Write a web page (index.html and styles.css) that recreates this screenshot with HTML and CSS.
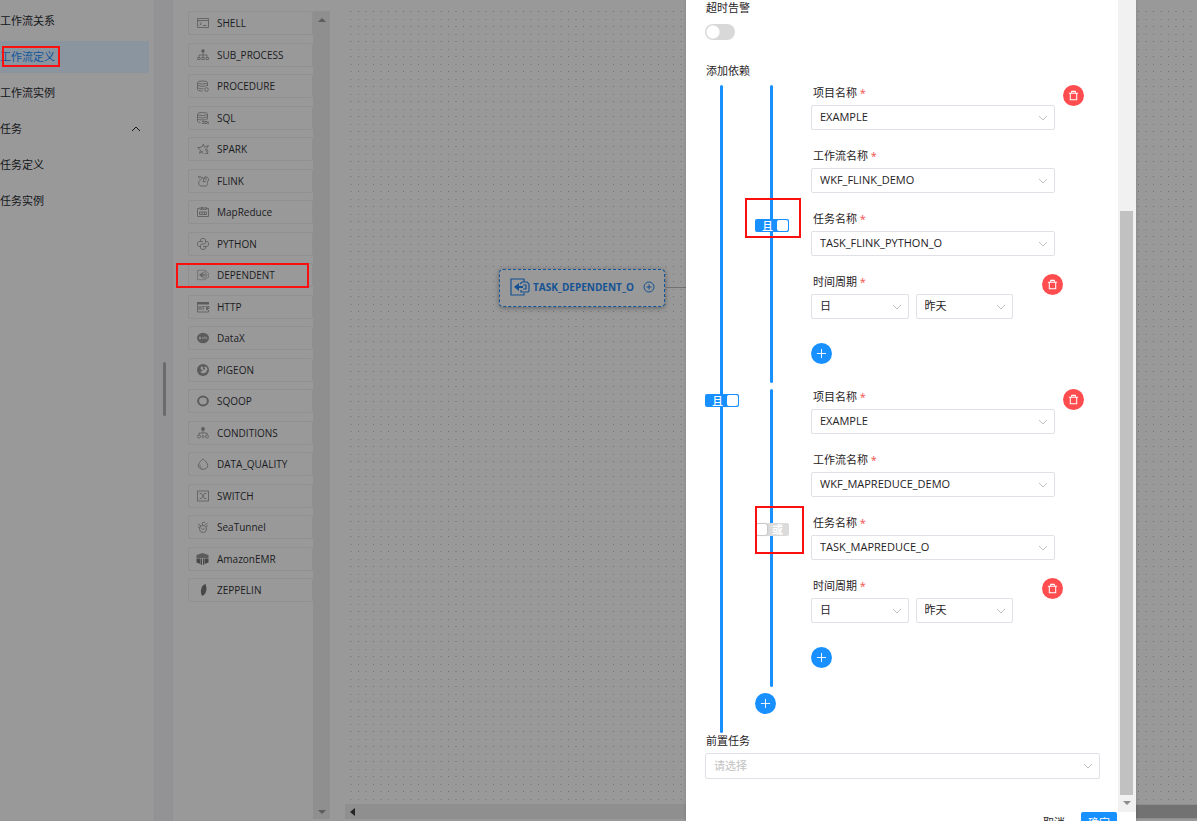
FILE: index.html
```html
<!DOCTYPE html>
<html lang="zh-CN">
<head>
<meta charset="utf-8">
<title>工作流定义</title>
<link rel="stylesheet" href="styles.css">
</head>
<body>
<svg class="defs" aria-hidden="true">
  <symbol id="chev" viewBox="0 0 10 6"><path d="M1 1l4 4 4-4" fill="none" stroke="currentColor"/></symbol>
  <symbol id="trash" viewBox="0 0 12 12"><path d="M1 3.500h10M4 3V1.500h4V3M2.500 3.500v7.200h7V3.500" fill="none" stroke="currentColor" stroke-width="1.100"/></symbol>
  <symbol id="plus" viewBox="0 0 12 12"><path d="M6 1v10M1 6h10" fill="none" stroke="currentColor"/></symbol>
  <symbol id="dep" viewBox="0 0 20 18"><path d="M14 4V1H1v16h13v-2" fill="none" stroke="currentColor" stroke-width="1.200"/><path d="M4 9l5-4v3h4v2H9v3z" fill="currentColor"/><path d="M10 6l2-2h5l2 2v7l-1 1h-7v-2M13 7h3v4h-3" fill="none" stroke="currentColor" stroke-width="1.200"/></symbol>
</svg>
<div class="page">
  <nav class="side">
    <a class="side-item" href="#">工作流关系</a>
    <a class="side-item active" href="#">工作流定义<span class="mark mark-side"></span></a>
    <a class="side-item" href="#">工作流实例</a>
    <a class="side-item" href="#">任务<svg class="side-chev"><use href="#chev"/></svg></a>
    <a class="side-item" href="#">任务定义</a>
    <a class="side-item" href="#">任务实例</a>
  </nav>
  <div class="gutter"><span class="handle"></span></div>
  <section class="palette">
    <ul class="tasks">
      <li><svg viewBox="0 0 12 12"><path d="M.5 1.500h11v9H.5zM.5 3.500h11M2.500 5l2 1.700-2 1.600M6 8.500h3.500"/></svg>SHELL</li>
      <li><svg viewBox="0 0 12 12"><circle class="f" cx="6" cy="2" r="1.700"/><path d="M6 3v5M2 8V6h8v2M.6 8.500h2.500v2H.6zM4.800 8.500h2.500v2H4.800zM9 8.500h2.500v2H9z"/></svg>SUB_PROCESS</li>
      <li><svg viewBox="0 0 12 12"><ellipse cx="5.500" cy="2.500" rx="5" ry="1.500"/><path d="M.5 2.500v7c0 1 2 1.500 5 1.500M10.500 2.500V6M.5 5c1 1.500 8 2 10 0M.5 7.500c1 1 3 1.500 6 1.200"/><circle cx="9.500" cy="9.500" r="1.800"/></svg>PROCEDURE</li>
      <li><svg viewBox="0 0 12 12"><ellipse cx="5.500" cy="2" rx="5" ry="1.500"/><path d="M.5 2v7c0 1 1 1.500 3 1.700M10.500 2v5M.5 4.500c1 1.500 8 2 10 0M.5 7c1 1 8 1.500 10 0M5 9.500h2v2H5M8 9.500h2v2H8zM11 9v2.500h1"/></svg>SQL</li>
      <li><svg viewBox="0 0 12 12"><path d="M6.500 1l.8 3.200 4.200-1.700-2 3.200 1.500 3M6.500 1L4.500 4.200.5 4.500l3 2.500L2.500 10.500 6 8M4 8.500l2.500 2M8 6l3 4.500H8"/></svg>SPARK</li>
      <li><svg viewBox="0 0 12 12"><path d="M3 4C.5 2 1 .8 3 1.500s2 2 1 3l-2 2c-1 2 0 4.500 2 4.500h4c3 0 3-2 2-4 2-1 2-3 .5-4.500S7 1 7.500 4M5 2l2 2-1 3 3-1M9 2v3"/></svg>FLINK</li>
      <li><svg viewBox="0 0 12 12"><path d="M2.500 2.500H.5v8h11v-8h-2M3 1v2.500h1.500V1M5.500 1v2.500H7V1M8 1v2.500h1.500V1M2.500 6h7v2.500h-7zM5 6v2.500M7.500 6v2.500"/></svg>MapReduce</li>
      <li><svg viewBox="0 0 12 12"><path d="M3.500 3.500V2c0-2 5-2 5 0v2.500c0 1-.5 1.500-1.500 1.500H5C4 6 3.500 6.500 3.500 7.500v1H2C0 8.500 0 3.500 2 3.500h4M8.500 3.500H10c2 0 2 5 0 5H6M8.500 8.500V10c0 2-5 2-5 0V8"/></svg>PYTHON</li>
      <li><svg viewBox="0 0 20 18"><use href="#dep"/></svg>DEPENDENT<span class="mark mark-task"></span></li>
      <li><svg viewBox="0 0 12 12"><path class="f" d="M0 1h12v2.500H0z"/><path d="M.5 3v8h11V9M2 5v4M4 5v4M2 7h2M5 5.500h2.500M6.200 5.500V9M8 5.500h1.500V9M10.500 9V5.500H12v2h-1.500"/></svg>HTTP</li>
      <li><svg viewBox="0 0 12 12"><ellipse class="f" cx="6" cy="6" rx="6" ry="5.200"/><path class="lite" d="M2.500 5v2h1V5zM5 7l.7-2 .7 2M7 5h1.500M8 5v2M9 5l1 2"/></svg>DataX</li>
      <li><svg viewBox="0 0 12 12"><circle class="f" cx="6" cy="6" r="6"/><path class="lite2" d="M4 2l2 1.500L9 2.500 10.500 5 9 8.500 6 9.500 3 8l3-1.500L3.500 5z"/><path class="f" d="M6 3.500h2v2H6z"/></svg>PIGEON</li>
      <li><svg viewBox="0 0 12 12"><ellipse class="ring" cx="6" cy="6" rx="4.900" ry="4.400"/></svg>SQOOP</li>
      <li><svg viewBox="0 0 12 12"><circle class="f" cx="6" cy="2" r="1.900"/><path d="M6 3v3M2 8V6h8v2"/><circle cx="2" cy="9.500" r="1.500"/><circle cx="6" cy="9.500" r="1"/><circle cx="10" cy="9.500" r="1.500"/></svg>CONDITIONS</li>
      <li><svg viewBox="0 0 12 12"><path d="M6 .8C4 3 1.200 5 1.200 7.500c0 5 9.600 5 9.600 0C10.800 5 8 3 6 .8zM3 6.500c-.5 2 .5 3 1.500 3.500"/></svg>DATA_QUALITY</li>
      <li><svg viewBox="0 0 12 12"><path d="M.5 1h11v10H.5zM2.500 3.500h2L7.500 8.500h2M2.500 8.500h2l3-5h2"/></svg>SWITCH</li>
      <li><svg viewBox="0 0 12 12"><circle cx="6" cy="8" r="3.500"/><path d="M4.500 7.500l1.500 1 1.500-1M1 3l3 2M6 4.500L5 2l3-1M8 4l2.500-2M9 5h2M1 6l2 .5"/></svg>SeaTunnel</li>
      <li><svg viewBox="0 0 12 12"><path class="f" d="M-.5 2L5.500 0l6 2v3h-12z"/><path class="dark" d="M-.5 5.500H3v5.300L-.5 9.500zM3.500 5.500H5V12l-1.500-.7zM6 5.500h1.500v5.800L6 12zM8 5.500h3.500v4L8 10.800z"/></svg>AmazonEMR</li>
      <li><svg viewBox="0 0 12 12"><path class="dark" d="M8.500 0C5 1 3.500 5 4 9l1 3c3-1 4.500-4 4.500-8z"/></svg>ZEPPELIN</li>
    </ul>
    <div class="vbar"><i class="tri up"></i><i class="tri down"></i></div>
  </section>
  <main class="canvas">
    <div class="dots">
      <svg class="grid" aria-hidden="true">
        <pattern id="dot-grid" width="15" height="15" patternUnits="userSpaceOnUse">
          <path fill="#6f6f6f" d="M13 0h1v1h-1z"/><path fill="#7c7c7c" d="M13 8h1v1h-1z"/>
          <path fill="#848484" d="M5 0h2v1H5z"/><path fill="#888" d="M5 8h2v1H5z"/>
        </pattern>
        <rect width="100%" height="100%" fill="url(#dot-grid)"/>
      </svg>
      <div class="node">
        <svg class="node-icon"><use href="#dep"/></svg>
        <span>TASK_DEPENDENT_O</span>
        <svg class="node-add" viewBox="0 0 12 12"><circle cx="6" cy="6" r="5"/><path d="M6 3.500v5M3.500 6h5"/></svg>
      </div>
      <i class="edge"></i>
    </div>
    <div class="hbar"><i class="tri left"></i><i class="hthumb"></i></div>
  </main>

  <aside class="drawer">
    <div class="drawer-main">
      <form class="form" id="task-form">
        <label class="label" for="timeout">超时告警</label>
        <input class="toggle" type="checkbox" id="timeout">
        <div class="label dep-title">添加依赖</div>
        <div class="deps">
          <div class="rail"><label class="sw on"><input type="checkbox" checked><span>且</span></label></div>
          <div class="groups">
            <div class="group">
              <div class="rail"><label class="sw on"><input type="checkbox" checked><span>且</span></label><i class="mark mark-and"></i></div>
              <div class="fields">
                <div class="line">
                  <div class="field"><label class="label" for="p1">项目名称 <b>*</b></label><div class="pick"><select id="p1"><option>EXAMPLE</option></select><svg><use href="#chev"/></svg></div></div>
                  <button class="round del" type="button" aria-label="删除"><svg><use href="#trash"/></svg></button>
                </div>
                <div class="line"><div class="field"><label class="label" for="w1">工作流名称 <b>*</b></label><div class="pick"><select id="w1"><option>WKF_FLINK_DEMO</option></select><svg><use href="#chev"/></svg></div></div></div>
                <div class="line"><div class="field"><label class="label" for="t1">任务名称 <b>*</b></label><div class="pick"><select id="t1"><option>TASK_FLINK_PYTHON_O</option></select><svg><use href="#chev"/></svg></div></div></div>
                <div class="line period">
                  <div class="field"><label class="label" for="c1">时间周期 <b>*</b></label><div class="pair"><div class="pick"><select id="c1"><option>日</option></select><svg><use href="#chev"/></svg></div><div class="pick"><select aria-label="日期"><option>昨天</option></select><svg><use href="#chev"/></svg></div></div></div>
                  <button class="round del" type="button" aria-label="删除"><svg><use href="#trash"/></svg></button>
                </div>
                <button class="round add" type="button" aria-label="添加"><svg><use href="#plus"/></svg></button>
              </div>
            </div>
            <div class="group">
              <div class="rail"><label class="sw"><input type="checkbox"><span>或</span></label><i class="mark mark-or"></i></div>
              <div class="fields">
                <div class="line">
                  <div class="field"><label class="label" for="p2">项目名称 <b>*</b></label><div class="pick"><select id="p2"><option>EXAMPLE</option></select><svg><use href="#chev"/></svg></div></div>
                  <button class="round del" type="button" aria-label="删除"><svg><use href="#trash"/></svg></button>
                </div>
                <div class="line"><div class="field"><label class="label" for="w2">工作流名称 <b>*</b></label><div class="pick"><select id="w2"><option>WKF_MAPREDUCE_DEMO</option></select><svg><use href="#chev"/></svg></div></div></div>
                <div class="line"><div class="field"><label class="label" for="t2">任务名称 <b>*</b></label><div class="pick"><select id="t2"><option>TASK_MAPREDUCE_O</option></select><svg><use href="#chev"/></svg></div></div></div>
                <div class="line period">
                  <div class="field"><label class="label" for="c2">时间周期 <b>*</b></label><div class="pair"><div class="pick"><select id="c2"><option>日</option></select><svg><use href="#chev"/></svg></div><div class="pick"><select aria-label="日期"><option>昨天</option></select><svg><use href="#chev"/></svg></div></div></div>
                  <button class="round del" type="button" aria-label="删除"><svg><use href="#trash"/></svg></button>
                </div>
                <button class="round add" type="button" aria-label="添加"><svg><use href="#plus"/></svg></button>
              </div>
            </div>
            <button class="round" type="button" aria-label="添加"><svg><use href="#plus"/></svg></button>
          </div>
        </div>
        <label class="label" for="pre">前置任务</label>
        <div class="pick empty"><select id="pre"><option>请选择</option></select><svg><use href="#chev"/></svg></div>
      </form>
      <div class="dbar"><i class="dthumb"></i><i class="tri down"></i></div>
    </div>
    <footer class="foot"><button class="text-btn" type="button">取消</button><button class="ok-btn" type="submit" form="task-form">确定</button></footer>
  </aside>
</div>
</body>
</html>
```
FILE: styles.css
```css
* { box-sizing: border-box; }
body {
  margin: 0;
  background: #999;
  color: #1f2225;
  font-family: "Open Sans", "Noto Sans CJK SC", sans-serif;
  font-size: 11px;
  line-height: 16px;
}
button, select, input { font: inherit; color: inherit; margin: 0; }
.defs { position: absolute; width: 0; height: 0; }
.page { position: relative; display: flex; height: 100vh; overflow: hidden; }

.mark { position: absolute; border: 2px solid #fb0f0f; pointer-events: none; z-index: 2; }
.mark-side { left: 2px; top: 5px; width: 58px; height: 21px; }
.mark-task { left: -13px; right: 3px; top: -1px; height: 25px; }
.mark-and { left: -10px; top: 113px; width: 56px; height: 40px; }
.mark-or { left: 0; top: 117px; width: 49px; height: 48px; }

.side { flex: none; width: 154px; padding: 5px 5px 0 0; display: flex; flex-direction: column; gap: 4px; }
.side-item {
  position: relative; display: flex; align-items: center; height: 32px;
  color: #14161a; text-decoration: none; border-radius: 0 2px 2px 0;
}
.side-item.active { background: #8b959f; color: #0f569b; }
.side-chev { width: 10px; height: 6px; margin-left: auto; margin-right: 8px; transform: rotate(180deg); }

.gutter { flex: none; width: 19px; background: #939396; border: solid #8f8f96; border-width: 0 1px; display: flex; align-items: center; justify-content: flex-end; }
.handle { width: 3px; height: 54px; margin: 0 6px 43px 0; border-radius: 2px; background: #6b6b6b; }

.palette { flex: none; width: 157px; padding: 11px 0 2px 15px; display: flex; }
.tasks { flex: 1; list-style: none; margin: 0; padding: 0; font-size: 10px; }
.tasks li {
  position: relative; display: flex; align-items: center; gap: 8px; height: 24px;
  margin-bottom: 8px; padding: 0 8px 1px; border: 1px solid #909092; border-radius: 2px; color: #1b1c1f;
}
.tasks li:nth-child(even) { margin-bottom: 7px; }
.tasks svg { width: 12px; height: 12px; fill: none; stroke: #666; color: #666; overflow: visible; }
.tasks svg .f { fill: #5c5c5c; stroke: none; }
.tasks svg .dark { fill: #484848; stroke: none; }
.tasks svg .lite { stroke: #888; }
.tasks svg .lite2 { fill: #999; stroke: none; }
.tasks svg .ring { stroke: #5c5c5c; stroke-width: 2; }
.vbar { flex: none; width: 17px; background: #8f8f8f; display: flex; flex-direction: column; justify-content: space-between; align-items: center; padding: 7px 0 5px; }

.tri { width: 0; height: 0; border: 4px solid transparent; }
.tri.up { border-top: 0; border-bottom-color: #5c5c5c; }
.tri.down { border-bottom: 0; border-top-color: #5c5c5c; }
.tri.left { border-left: 0; border-right: 5px solid #242424; }

.canvas { flex: 1; min-width: 0; padding: 11px 0 2px 15px; display: flex; flex-direction: column; }
.dots { position: relative; flex: 1; }
.grid { position: absolute; left: 0; top: 0; width: 100%; height: 100%; }
.node {
  position: absolute; left: 154px; top: 258px; width: 166px; height: 38px;
  display: flex; align-items: center; gap: 3px; padding: 0 9px 2px 10px;
  border: 1px dashed #12559a; border-radius: 4px; background: #999; color: #155293;
  font-size: 10px; font-weight: 700; box-shadow: 0 1px 5px rgba(0, 0, 0, .35);
}
.node-icon { width: 20px; height: 18px; }
.node-add { width: 12px; height: 12px; margin-left: auto; fill: none; stroke: currentColor; }
.edge { position: absolute; left: 320px; top: 276px; width: 200px; height: 1px; background: #707070; }
.hbar { flex: none; height: 15px; background: #8f8f8f; display: flex; align-items: center; padding-left: 5px; }
.hthumb { width: 40%; height: 13px; margin-left: auto; background: #727272; }

.drawer {
  position: absolute; top: 0; right: 61px; bottom: -16px; width: 450px;
  display: flex; flex-direction: column; background: #fff; box-shadow: 0 0 3px rgba(0, 0, 0, .15);
}
.drawer-main { flex: 1; min-height: 0; display: flex; }
.form { flex: 1; min-width: 0; padding: 0 18px 0 19px; overflow: hidden; }
.label { display: block; height: 16px; padding-left: 2px; white-space: nowrap; }
.label b { color: #f05050; font-weight: 400; }
.form > .label { padding-left: 1px; }
.toggle { appearance: none; display: block; width: 30px; height: 16px; margin-top: 8px; border-radius: 8px; background: radial-gradient(circle at 8px 8px, #fff 6px, #d8d8d8 7px); }
.form > .dep-title { margin: 23px 0 6px; }

.deps { display: grid; grid-template-columns: 34px 1fr; column-gap: 16px; }
.rail { position: relative; display: flex; align-items: center; padding-bottom: 18px; }
.rail::before { content: ""; position: absolute; left: 15px; top: 0; bottom: 0; width: 3px; border-radius: 2px; background: #1890ff; }
.groups { display: flex; flex-direction: column; align-items: stretch; gap: 6px; padding-bottom: 19px; }
.group { display: grid; grid-template-columns: 34px 1fr; column-gap: 22px; }
.sw { position: relative; display: flex; align-items: center; width: 34px; height: 13px; padding: 0 1px; border-radius: 2px; background: #dbdbdb; color: #fff; line-height: 13px; font-weight: 700; }
.sw input { appearance: none; flex: none; width: 11px; height: 11px; border-radius: 2px; background: #fff; box-shadow: 0 0 2px rgba(0, 0, 0, .3); }
.sw span { flex: 1; text-align: center; }
.sw.on { flex-direction: row-reverse; background: #1890ff; font-weight: 500; }
.sw.on span { padding-left: 2px; }
.sw.on input { box-shadow: none; }

.fields { display: flex; flex-direction: column; gap: 18px; padding: 0 16px 19px 0; }
.line { display: flex; align-items: flex-start; gap: 8px; padding-right: 29px; }
.line:has(.del) { padding-right: 0; }
.line.period { gap: 29px; padding-right: 21px; }
.field { flex: 1; min-width: 0; }
.field .label { margin-bottom: 4px; }
.pair { display: flex; gap: 7px; }
.pair .pick { flex: 1; }
.pick { position: relative; height: 25px; }
.pick select { appearance: none; display: block; width: 100%; height: 100%; padding: 0 24px 1px 8px; border: 1px solid #e0e0e6; border-radius: 2px; background: #fff; }
.pick svg { position: absolute; right: 7px; top: 10px; width: 10px; height: 6px; color: #c2c2c2; pointer-events: none; }
.pick.empty { height: 26px; margin-top: 4px; color: #c2c2c2; }

.round { flex: none; width: 21px; height: 21px; padding: 0; border: 0; border-radius: 50%; background: #1890ff; color: #fff; display: flex; align-items: center; justify-content: center; }
.round svg { width: 11px; height: 11px; }
.round.del { background: #ff4d4f; }
.fields > .add { margin-top: 6px; }

.dbar { flex: none; width: 18px; padding: 211px 3px 7px 2px; background: #f1f1f1; display: flex; flex-direction: column; align-items: center; gap: 6px; }
.dthumb { flex: 1; width: 100%; background: #c1c1c1; }
.dbar .tri { border-top-color: #8c8c8c; }
.foot { flex: none; display: flex; justify-content: flex-end; height: 25px; padding-right: 19px; }
.text-btn, .ok-btn { height: 21px; border: 0; border-radius: 2px; padding: 0 7px; background: none; line-height: 21px; }
.text-btn { margin-right: 9px; }
.ok-btn { background: #1890ff; color: #fff; }
```
